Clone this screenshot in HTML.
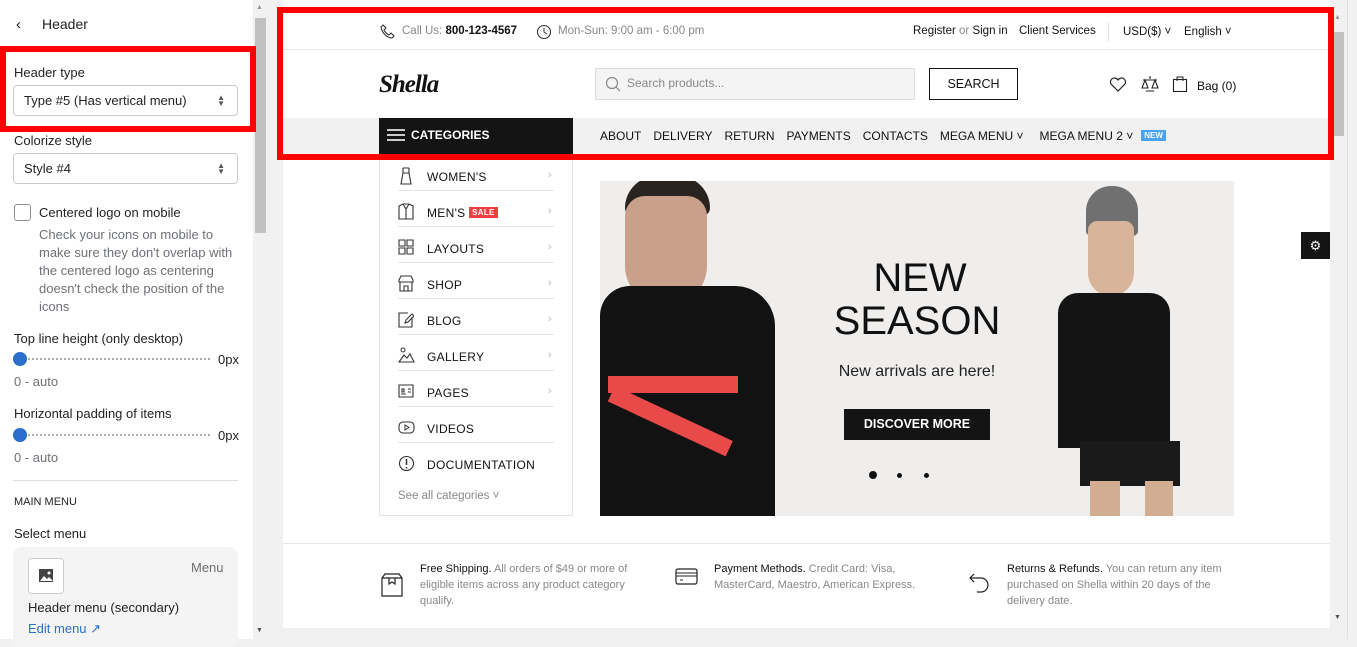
<!DOCTYPE html>
<html><head><meta charset="utf-8"><style>
*{margin:0;padding:0;box-sizing:border-box}
body{width:1357px;height:639px;overflow:hidden;background:#f1f1f1;font-family:"Liberation Sans",Arial,sans-serif;position:relative;color:#222}
.a{position:absolute}
#left{left:0;top:0;width:253px;height:639px;background:#fff;font-size:13px;color:#202223}
.sel{border:1px solid #c9cccf;border-radius:4px;height:31px;padding:0 10px;line-height:29px;font-size:13px;background:#fff}
.arr{position:absolute;right:12px;top:9px;font-size:8px;line-height:6px;color:#555}
.help{color:#6d7175}
.slider{height:2px;border-top:2px dotted #aaa}
.knob{width:14px;height:14px;border-radius:50%;background:#2c6ecb}
#prev{left:283px;top:0;width:1047px;height:628px;background:#fff}
.top{font-size:11.5px;color:#888}
.nav span{margin-right:12px}
.cat div.it{position:absolute;left:18px;width:156px;height:36px;border-bottom:1px solid #e4e4e4;font-size:12px;color:#111;letter-spacing:.3px}
.it b{font-weight:normal;position:absolute;left:29px;top:15px}
.it i{position:absolute;right:2px;top:14px;font-style:normal;color:#bbb;font-size:11px}
.it svg{position:absolute;left:0;top:12px}
.foot{font-size:11px;color:#888;line-height:16px}
.foot b{font-weight:normal;color:#111}
.red{border:6px solid #f00;position:absolute}
</style></head><body>
<div id="left" class="a">
 <div class="a" style="left:16px;top:16px;font-size:15px">&#8249;</div>
 <div class="a" style="left:42px;top:16px;font-size:14px;font-weight:500">Header</div>
 <div class="a" style="left:14px;top:65px">Header type</div>
 <div class="a sel" style="left:13px;top:85px;width:225px">Type #5 (Has vertical menu)<span class="arr">▲<br>▼</span></div>
 <div class="a" style="left:14px;top:133px">Colorize style</div>
 <div class="a sel" style="left:13px;top:153px;width:225px">Style #4<span class="arr">▲<br>▼</span></div>
 <div class="a" style="left:14px;top:204px;width:17px;height:17px;border:1px solid #8c9196;border-radius:3px"></div>
 <div class="a" style="left:39px;top:205px">Centered logo on mobile</div>
 <div class="a help" style="left:39px;top:226px;width:200px;line-height:18px">Check your icons on mobile to make sure they don't overlap with the centered logo as centering doesn't check the position of the icons</div>
 <div class="a" style="left:14px;top:331px">Top line height (only desktop)</div>
 <div class="a slider" style="left:20px;top:358px;width:190px"></div>
 <div class="a knob" style="left:13px;top:352px"></div>
 <div class="a" style="left:218px;top:352px">0px</div>
 <div class="a help" style="left:14px;top:374px">0 - auto</div>
 <div class="a" style="left:14px;top:406px">Horizontal padding of items</div>
 <div class="a slider" style="left:20px;top:434px;width:190px"></div>
 <div class="a knob" style="left:13px;top:428px"></div>
 <div class="a" style="left:218px;top:428px">0px</div>
 <div class="a help" style="left:14px;top:450px">0 - auto</div>
 <div class="a" style="left:13px;top:480px;width:225px;border-top:1px solid #ddd"></div>
 <div class="a" style="left:14px;top:496px;font-size:11px">MAIN MENU</div>
 <div class="a" style="left:14px;top:526px">Select menu</div>
 <div class="a" style="left:13px;top:547px;width:225px;height:100px;background:#f4f4f4;border-radius:8px"></div>
 <div class="a" style="left:28px;top:558px;width:36px;height:36px;border:1px solid #ccc;border-radius:4px;background:#fff"><svg width="34" height="34"><rect x="10" y="10" width="14" height="13" fill="#444"/><path d="M11 22l4-5 3 3 2-2 4 4z" fill="#fff"/><circle cx="20" cy="14" r="1.5" fill="#fff"/></svg></div>
 <div class="a help" style="left:191px;top:560px">Menu</div>
 <div class="a" style="left:28px;top:600px">Header menu (secondary)</div>
 <div class="a" style="left:28px;top:621px;color:#2c6ecb">Edit menu ↗</div>
</div>
<div class="a" style="left:253px;top:0;width:15px;height:639px;background:#f1f1f1"></div>
<div class="a" style="left:255px;top:18px;width:11px;height:215px;background:#c1c1c1"></div>
<div class="a" style="left:256px;top:4px;font-size:7px;color:#999">▲</div>
<div class="a" style="left:256px;top:627px;font-size:7px;color:#555">▼</div>

<div id="prev" class="a">
 <svg class="a" style="left:97px;top:24px" width="16" height="16" viewBox="0 0 16 16"><path d="M3 1l3 3-2 2c1 2 3 4 5 5l2-2 3 3-2 2C7 14 2 9 1 3z" fill="none" stroke="#333" stroke-width="1.1"/></svg>
 <div class="a top" style="left:119px;top:25px">Call Us: <b style="color:#111">800-123-4567</b></div>
 <svg class="a" style="left:253px;top:24px" width="16" height="16"><circle cx="8" cy="8" r="6.5" fill="none" stroke="#333" stroke-width="1.1"/><path d="M8 4v4l3 2" fill="none" stroke="#333"/></svg>
 <div class="a top" style="left:275px;top:25px">Mon-Sun: 9:00 am - 6:00 pm</div>
 <div class="a top" style="left:630px;top:25px;color:#111">Register <span style="color:#888">or</span> Sign in</div>
 <div class="a top" style="left:736px;top:25px;color:#111">Client Services</div>
 <div class="a" style="left:825px;top:23px;height:18px;border-left:1px solid #ddd"></div>
 <div class="a top" style="left:840px;top:26px;color:#111">USD($) ˅</div>
 <div class="a top" style="left:901px;top:26px;color:#111">English ˅</div>
 <div class="a" style="left:0;top:49px;width:1047px;border-top:1px solid #e6e6e6"></div>
 <div class="a" style="left:96px;top:71px;font-family:'Liberation Serif',serif;font-style:italic;font-weight:bold;font-size:25px;color:#111;letter-spacing:-1px">Shella</div>
 <div class="a" style="left:312px;top:68px;width:320px;height:32px;background:#f4f4f4;border:1px solid #ddd"></div>
 <svg class="a" style="left:322px;top:76px" width="16" height="16"><circle cx="7" cy="7" r="5.5" fill="none" stroke="#888" stroke-width="1.2"/><path d="M11 11l4 4" stroke="#888" stroke-width="1.2"/></svg>
 <div class="a" style="left:344px;top:76px;font-size:12px;color:#888">Search products...</div>
 <div class="a" style="left:646px;top:68px;width:89px;height:32px;border:1px solid #111;text-align:center;line-height:30px;font-size:12.5px;color:#111">SEARCH</div>
 <svg class="a" style="left:826px;top:76px" width="18" height="16"><path d="M9 15L2 8a3.8 3.8 0 017-4 3.8 3.8 0 017 4z" fill="none" stroke="#222" stroke-width="1.2"/></svg>
 <svg class="a" style="left:857px;top:75px" width="20" height="18"><path d="M10 1v3M3 5h14M5 5l-3 8h6zM15 5l-3 8h6zM2 13h6M12 13h6M6 16h8" fill="none" stroke="#222" stroke-width="1.1"/></svg>
 <svg class="a" style="left:889px;top:75px" width="16" height="17"><rect x="1.5" y="4.5" width="13" height="12" fill="none" stroke="#222" stroke-width="1.1"/><path d="M5 6V2h6v4" fill="none" stroke="#222"/></svg>
 <div class="a" style="left:914px;top:79px;font-size:12px;color:#111">Bag (0)</div>
 <div class="a" style="left:0;top:118px;width:1047px;height:37px;background:#f1f1f1"></div>
 <div class="a" style="left:96px;top:118px;width:194px;height:36px;background:#141414"></div>
 <div class="a" style="left:104px;top:129px;width:18px;height:12px;border-top:2px solid #ccc;border-bottom:2px solid #ccc"></div>
 <div class="a" style="left:104px;top:134px;width:18px;border-top:2px solid #ccc"></div>
 <div class="a" style="left:128px;top:128px;color:#fff;font-size:12px;font-weight:bold">CATEGORIES</div>
 <div class="a nav" style="left:317px;top:129px;font-size:12px;color:#111;white-space:nowrap"><span>ABOUT</span><span>DELIVERY</span><span>RETURN</span><span>PAYMENTS</span><span>CONTACTS</span><span>MEGA MENU ˅</span><span style="margin-left:4px">MEGA MENU 2 ˅</span><span style="background:#4aa3f0;color:#fff;font-size:8px;font-weight:bold;padding:1px 3px;vertical-align:2px;margin-left:-4px">NEW</span></div>
 <div class="a cat" style="left:96px;top:155px;width:194px;height:361px;border:1px solid #e4e4e4;border-top:none">
  <div class="it" style="top:0"><svg width="16" height="18"><path d="M5 1h6M5 1v5l-2 11h10l-2-11V1M5 6h6" fill="none" stroke="#333" stroke-width="1.1"/></svg><b>WOMEN'S</b><i>›</i></div>
  <div class="it" style="top:36px"><svg width="16" height="18"><path d="M1 3l4-2h6l4 2v13H1zM5 1l3 5 3-5M8 6v10" fill="none" stroke="#333" stroke-width="1.1"/></svg><b>MEN'S <span style="background:#ef3f3f;color:#fff;font-size:8px;font-weight:bold;padding:1px 3px;vertical-align:2px">SALE</span></b><i>›</i></div>
  <div class="it" style="top:72px"><svg width="16" height="16"><path d="M1 1h6v6H1zM9 1h6v6H9zM1 9h6v6H1zM9 9h6v6H9z" fill="none" stroke="#333" stroke-width="1.1"/></svg><b>LAYOUTS</b><i>›</i></div>
  <div class="it" style="top:108px"><svg width="16" height="17"><path d="M1 5l2-4h10l2 4v2H1zM2 7v9h12V7M6 16v-5h4v5" fill="none" stroke="#333" stroke-width="1.1"/></svg><b>SHOP</b><i>›</i></div>
  <div class="it" style="top:144px"><svg width="16" height="17"><path d="M14 6v10H1V2h9M7 12l1-3 6-6 2 2-6 6z" fill="none" stroke="#333" stroke-width="1.1"/></svg><b>BLOG</b><i>›</i></div>
  <div class="it" style="top:180px"><svg width="17" height="16"><circle cx="5" cy="3" r="2" fill="none" stroke="#333"/><path d="M1 15l5-7 3 3 3-4 4 8z" fill="none" stroke="#333" stroke-width="1.1"/></svg><b>GALLERY</b><i>›</i></div>
  <div class="it" style="top:216px"><svg width="16" height="16"><path d="M1 2h14v12H1zM3 11h5M4 6h2v3H4zM10 6h3M10 9h3" fill="none" stroke="#333" stroke-width="1.1"/></svg><b>PAGES</b><i>›</i></div>
  <div class="it" style="top:252px"><svg width="17" height="16"><rect x="1" y="3" width="15" height="11" rx="4" fill="none" stroke="#333" stroke-width="1.1"/><path d="M7 6v5l4-2.5z" fill="none" stroke="#333"/></svg><b>VIDEOS</b></div>
  <div class="it" style="top:288px;border-bottom:none"><svg width="17" height="17"><circle cx="8.5" cy="8.5" r="7" fill="none" stroke="#333" stroke-width="1.1"/><path d="M8.5 4v6M8.5 12v1.5" stroke="#333" stroke-width="1.5"/></svg><b>DOCUMENTATION</b></div>
  <div class="a" style="left:18px;top:335px;font-size:11.5px;color:#888">See all categories ˅</div>
 </div>
 <div class="a" style="left:317px;top:181px;width:634px;height:335px;background:#efeeed;overflow:hidden">
  <div class="a" style="left:25px;top:-5px;width:85px;height:40px;background:#2a2420;border-radius:40px 40px 10px 10px"></div>
  <div class="a" style="left:25px;top:15px;width:82px;height:110px;background:#c9a08a;border-radius:20px 20px 40px 40px"></div>
  <div class="a" style="left:0;top:105px;width:175px;height:240px;background:#121212;border-radius:30px 40px 0 0"></div>
  <div class="a" style="left:8px;top:195px;width:130px;height:17px;background:#e84a4a"></div>
  <div class="a" style="left:15px;top:205px;width:130px;height:17px;background:#e84a4a;transform:rotate(25deg);transform-origin:0 0"></div>
  <div class="a" style="left:270px;top:77px;width:100px;text-align:center;font-size:40px;color:#111;line-height:40px">NEW</div>
  <div class="a" style="left:200px;top:119px;width:234px;text-align:center;font-size:40px;color:#111;line-height:42px">SEASON</div>
  <div class="a" style="left:200px;top:182px;width:234px;text-align:center;font-size:16px;color:#222">New arrivals are here!</div>
  <div class="a" style="left:244px;top:228px;width:146px;height:31px;background:#141414;color:#fff;font-size:12.5px;font-weight:bold;text-align:center;line-height:31px">DISCOVER MORE</div>
  <div class="a" style="left:269px;top:290px;width:8px;height:8px;border-radius:50%;background:#111"></div>
  <div class="a" style="left:297px;top:292px;width:5px;height:5px;border-radius:50%;background:#111"></div>
  <div class="a" style="left:324px;top:292px;width:5px;height:5px;border-radius:50%;background:#111"></div>
  <div class="a" style="left:486px;top:5px;width:52px;height:50px;background:#707070;border-radius:25px 25px 5px 5px"></div>
  <div class="a" style="left:488px;top:40px;width:46px;height:75px;background:#d8b49a;border-radius:10px 10px 25px 25px"></div>
  <div class="a" style="left:458px;top:112px;width:112px;height:155px;background:#141414;border-radius:20px 20px 0 0"></div>
  <div class="a" style="left:480px;top:260px;width:100px;height:45px;background:#1a1a1a"></div>
  <div class="a" style="left:490px;top:300px;width:30px;height:40px;background:#d3ad92"></div>
  <div class="a" style="left:545px;top:300px;width:28px;height:40px;background:#d3ad92"></div>
 </div>
 <div class="a" style="left:0;top:543px;width:1047px;border-top:1px solid #e6e6e6"></div>
 <svg class="a" style="left:98px;top:573px" width="22" height="24"><path d="M1 5h20v18H1zM1 5l3-4h14l3 4M8 5v6l3-2 3 2V5" fill="none" stroke="#222" stroke-width="1.2"/></svg>
 <div class="a foot" style="left:137px;top:561px;width:225px"><b>Free Shipping.</b> All orders of $49 or more of eligible items across any product category qualify.</div>
 <svg class="a" style="left:392px;top:568px" width="24" height="18"><rect x="1" y="1" width="21" height="15" rx="2" fill="none" stroke="#222" stroke-width="1.2"/><path d="M1 5h21M1 8h21M5 12h3" stroke="#222"/></svg>
 <div class="a foot" style="left:431px;top:561px;width:215px"><b>Payment Methods.</b> Credit Card: Visa, MasterCard, Maestro, American Express.</div>
 <svg class="a" style="left:685px;top:573px" width="22" height="22"><path d="M6 1L2 5l4 4M2 5h11a7 7 0 010 14H9" fill="none" stroke="#222" stroke-width="1.2"/></svg>
 <div class="a foot" style="left:724px;top:561px;width:225px"><b>Returns &amp; Refunds.</b> You can return any item purchased on Shella within 20 days of the delivery date.</div>
 <div class="a" style="left:1018px;top:232px;width:29px;height:27px;background:#141414;color:#fff;font-size:13px;text-align:center;line-height:27px">⚙</div>
</div>
<div class="a" style="left:1330px;top:0;width:17px;height:628px;background:#f1f1f1"></div>
<div class="a" style="left:1333px;top:32px;width:11px;height:104px;background:#c1c1c1"></div>
<div class="a" style="left:1334px;top:14px;font-size:7px;color:#999">▲</div>
<div class="a" style="left:1334px;top:614px;font-size:7px;color:#555">▼</div>
<div class="a" style="left:1347px;top:0;width:1px;height:639px;background:#e0e0e0"></div>
<div class="red" style="left:0;top:46px;width:256px;height:86px"></div>
<div class="red" style="left:277px;top:7px;width:1057px;height:153px"></div>
</body></html>
